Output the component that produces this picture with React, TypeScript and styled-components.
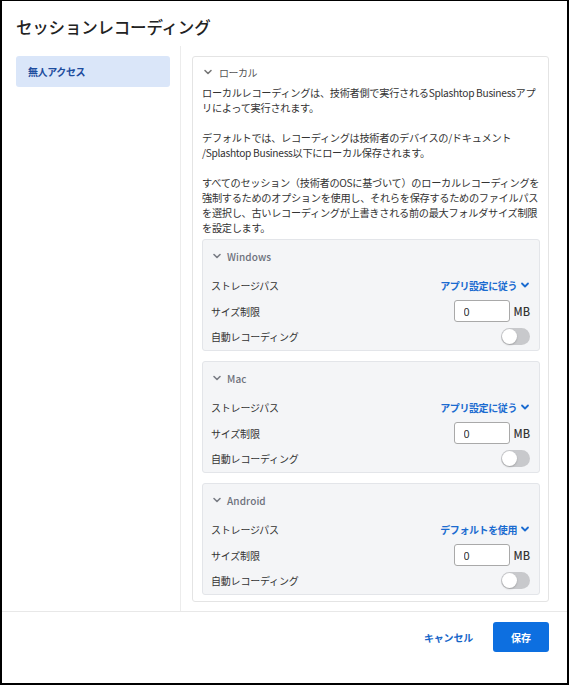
import React from "react";
import styled, { createGlobalStyle } from "styled-components";

const Global = createGlobalStyle`
  html, body { margin: 0; padding: 0; background: #fff; }
  * { box-sizing: border-box; }
  body {
    font-family: "Noto Sans CJK JP", "Noto Sans", sans-serif;
    color: #2b2b2b;
  }
  button, input { font-family: inherit; }
`;

const Frame = styled.div`
  width: 569px;
  height: 685px;
  border-style: solid;
  border-color: #000;
  border-width: 1px 2px 2px 2px;
  display: flex;
  flex-direction: column;
  background: #fff;
`;

const Header = styled.div`
  padding: 14px 14px 0;
  height: 45px;
  flex-shrink: 0;
`;

const Title = styled.h1`
  margin: 0;
  font-size: 16.5px;
  line-height: 24px;
  font-weight: 500;
  color: #222;
  letter-spacing: -0.2px;
`;

const Body = styled.div`
  display: flex;
  height: 566px;
  flex-shrink: 0;
  border-bottom: 1px solid #e8e8e8;
`;

const Sidebar = styled.nav`
  width: 179px;
  flex-shrink: 0;
  padding: 10px 10px 0 14px;
  border-right: 1px solid #ececec;
`;

const NavItem = styled.div<{ $active?: boolean }>`
  height: 31px;
  display: flex;
  align-items: center;
  padding-left: 12px;
  border-radius: 3px;
  background: ${(p) => (p.$active ? "#dae6f9" : "transparent")};
  color: #1d4d9e;
  font-size: 10px;
  font-weight: 700;
  letter-spacing: -0.4px;
`;

const Main = styled.div`
  flex: 1;
  min-width: 0;
  padding: 10px 18px 10px 11px;
`;

const Card = styled.section`
  border: 1px solid #e4e4e4;
  border-radius: 3px;
  padding: 6px 8px 7px 9px;
  height: 546px;
`;

const SectionHead = styled.div<{ $sub?: boolean }>`
  display: flex;
  align-items: center;
  gap: ${(p) => (p.$sub ? "5px" : "6px")};
  height: 18px;
  padding-left: 1px;
  color: ${(p) => (p.$sub ? "#6d717c" : "#555")};
  font-size: 10px;
  font-weight: ${(p) => (p.$sub ? 500 : 400)};
  letter-spacing: ${(p) => (p.$sub ? "0.1px" : "-0.5px")};
`;

const Paragraph = styled.p`
  margin: 4px 0 0;
  font-size: 10.2px;
  line-height: 15px;
  letter-spacing: -0.3px;
  color: #333;
  white-space: nowrap;
  & + & {
    margin-top: 15px;
  }
`;

const SubList = styled.div`
  display: flex;
  flex-direction: column;
  gap: 10px;
  margin-top: 4px;
`;

const SubCard = styled.div`
  background: #f4f5f7;
  border: 1px solid #e3e5e9;
  border-radius: 3px;
  padding: 7px 9px 5px 8px;
  height: 112px;
`;

const Rows = styled.div`
  display: flex;
  flex-direction: column;
  gap: 5px;
  margin-top: 10px;
`;

const Row = styled.div<{ $h: number }>`
  display: flex;
  align-items: center;
  justify-content: space-between;
  height: ${(p) => p.$h}px;
  font-size: 10px;
  letter-spacing: -0.2px;
  color: #333;
`;

const LinkSelect = styled.button`
  display: flex;
  align-items: center;
  gap: 3px;
  border: 0;
  background: none;
  padding: 0;
  font-size: 10px;
  letter-spacing: -0.4px;
  font-weight: 700;
  color: #1a6bd0;
`;

const SizeGroup = styled.div`
  display: flex;
  align-items: center;
  gap: 4px;
`;

const NumberInput = styled.input`
  width: 56px;
  height: 22px;
  border: 1px solid #a9a9a9;
  border-radius: 3px;
  padding: 0 9px;
  font-size: 11px;
  color: #333;
  background: #fff;
`;

const Unit = styled.span`
  font-size: 11px;
  font-weight: 500;
  letter-spacing: 0;
  color: #333;
`;

const Toggle = styled.div<{ $on?: boolean }>`
  position: relative;
  width: 29px;
  height: 17px;
  border-radius: 9px;
  background: ${(p) => (p.$on ? "#1a6bd0" : "#c8c9cc")};
  &::after {
    content: "";
    position: absolute;
    top: 1px;
    left: ${(p) => (p.$on ? "13px" : "1px")};
    width: 15px;
    height: 15px;
    border-radius: 50%;
    background: #fff;
    box-shadow: 0 1px 2px rgba(0, 0, 0, 0.2);
  }
`;

const Footer = styled.footer`
  display: flex;
  justify-content: flex-end;
  align-items: center;
  gap: 10px;
  padding: 10px 18px 0 0;
`;

const TextButton = styled.button`
  border: 0;
  background: none;
  height: 30px;
  padding: 0 10px;
  font-size: 10px;
  letter-spacing: -0.2px;
  font-weight: 700;
  color: #1565c8;
`;

const PrimaryButton = styled.button`
  border: 0;
  border-radius: 3px;
  width: 56px;
  height: 30px;
  background: #0d6fe0;
  color: #fff;
  font-size: 10px;
  font-weight: 700;
`;

const Chevron = ({ color, size = 10, width = 1.6 }: { color: string; size?: number; width?: number }) => (
  <svg width={size} height={size} viewBox="0 0 10 10" fill="none">
    <path d="M2 3.5 L5 6.5 L8 3.5" stroke={color} strokeWidth={width} strokeLinecap="round" strokeLinejoin="round" />
  </svg>
);

type Os = { name: string; path: string };
const oses: Os[] = [
  { name: "Windows", path: "アプリ設定に従う" },
  { name: "Mac", path: "アプリ設定に従う" },
  { name: "Android", path: "デフォルトを使用" },
];

export default function App() {
  return (
    <>
      <Global />
      <Frame>
        <Header>
          <Title>セッションレコーディング</Title>
        </Header>
        <Body>
          <Sidebar>
            <NavItem $active>無人アクセス</NavItem>
          </Sidebar>
          <Main>
            <Card>
              <SectionHead>
                <Chevron color="#777" />
                ローカル
              </SectionHead>
              <Paragraph>
                ローカルレコーディングは、技術者側で実行されるSplashtop Businessアプ
                <br />
                リによって実行されます。
              </Paragraph>
              <Paragraph>
                デフォルトでは、レコーディングは技術者のデバイスの/ドキュメント
                <br />
                /Splashtop Business以下にローカル保存されます。
              </Paragraph>
              <Paragraph>
                すべてのセッション（技術者のOSに基づいて）のローカルレコーディングを
                <br />
                強制するためのオプションを使用し、それらを保存するためのファイルパス
                <br />
                を選択し、古いレコーディングが上書きされる前の最大フォルダサイズ制限
                <br />
                を設定します。
              </Paragraph>
              <SubList>
                {oses.map((os) => (
                  <SubCard key={os.name}>
                    <SectionHead $sub>
                      <Chevron color="#7a7d85" />
                      {os.name}
                    </SectionHead>
                    <Rows>
                      <Row $h={20}>
                        <span>ストレージパス</span>
                        <LinkSelect>
                          {os.path}
                          <Chevron color="#1a6bd0" width={1.8} />
                        </LinkSelect>
                      </Row>
                      <Row $h={22}>
                        <span>サイズ制限</span>
                        <SizeGroup>
                          <NumberInput defaultValue="0" />
                          <Unit>MB</Unit>
                        </SizeGroup>
                      </Row>
                      <Row $h={18}>
                        <span>自動レコーディング</span>
                        <Toggle />
                      </Row>
                    </Rows>
                  </SubCard>
                ))}
              </SubList>
            </Card>
          </Main>
        </Body>
        <Footer>
          <TextButton>キャンセル</TextButton>
          <PrimaryButton>保存</PrimaryButton>
        </Footer>
      </Frame>
    </>
  );
}
